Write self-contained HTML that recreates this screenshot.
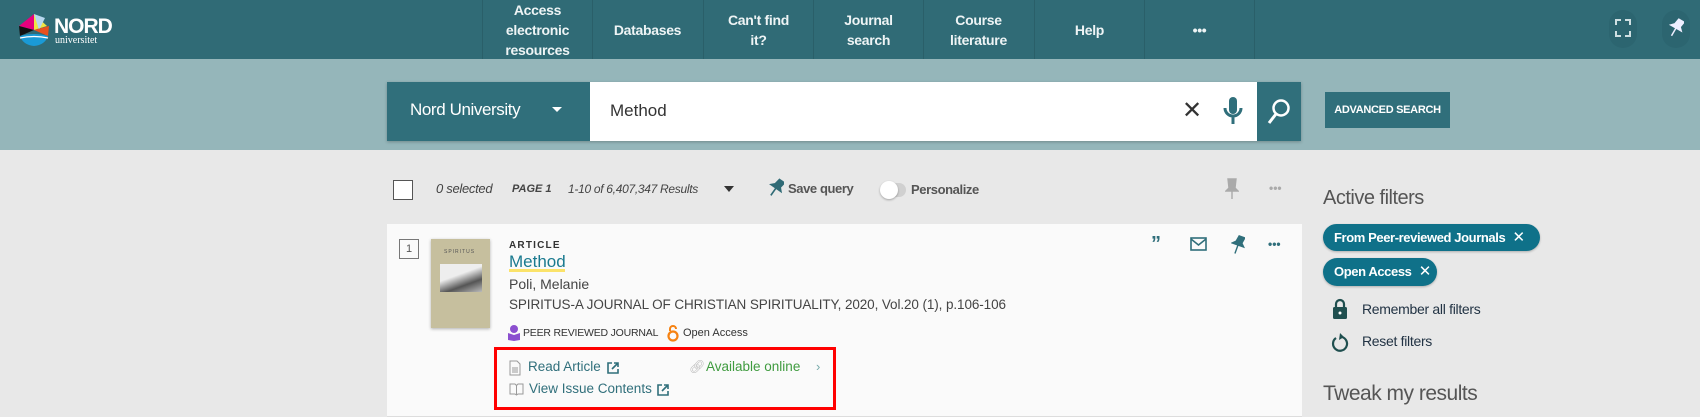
<!DOCTYPE html>
<html><head><meta charset="utf-8"><style>
*{box-sizing:border-box;margin:0;padding:0}
body{width:1700px;height:417px;overflow:hidden;background:#e8e8e8;font-family:"Liberation Sans",sans-serif;position:relative}
.a{position:absolute}
#hdr{left:0;top:0;width:1700px;height:59px;background:#306b76}
.nav{top:0;height:59px;width:110px;border-left:1px solid #2a5f69;color:#eef4f5;font-weight:bold;font-size:14px;line-height:20px;display:flex;align-items:center;justify-content:center;text-align:center;letter-spacing:-0.3px}
#band{left:0;top:59px;width:1700px;height:91px;background:#95b6ba}
.t{white-space:nowrap}
</style></head><body>
<div id="hdr" class="a"></div>
<svg class="a" style="left:17px;top:12px" width="34" height="36" viewBox="0 0 34 36">
<path d="M17 2 L2 14 L17 18Z" fill="#e5007d"/><path d="M17 2 L30 14 L17 18Z" fill="#f0e442"/><path d="M17 2 L22 18 L28 6Z" fill="#b7d7ef"/>
<path d="M2 14 L17 18 L3 24Z" fill="#111"/><path d="M17 18 L32 14 L31 24Z" fill="#e8501e"/>
<path d="M3 24 Q17 20 31 24 Q28 33 17 34 Q6 33 3 24Z" fill="#1a9ad6"/><path d="M3 26 Q17 23 31 26" stroke="#fff" stroke-width="1.2" fill="none"/></svg>
<div class="a t" style="left:54px;top:15px;color:#fff;font-weight:bold;font-size:21px;letter-spacing:-1px">NORD</div>
<div class="a t" style="left:55px;top:35px;color:#fff;font-size:10px;font-family:'Liberation Serif',serif">universitet</div>
<div class="a nav" style="left:482px">Access<br>electronic<br>resources</div>
<div class="a nav" style="left:592px">Databases</div>
<div class="a nav" style="left:703px">Can't find<br>it?</div>
<div class="a nav" style="left:813px">Journal<br>search</div>
<div class="a nav" style="left:923px">Course<br>literature</div>
<div class="a nav" style="left:1034px">Help</div>
<div class="a nav" style="left:1144px;border-right:1px solid #2a5f69;width:111px">•••</div>
<div class="a" style="left:1609px;top:10px;width:28px;height:38px;border-radius:14px;background:#2c6570"></div>
<div class="a" style="left:1662px;top:10px;width:28px;height:38px;border-radius:14px;background:#2c6570"></div>
<div class="a" style="left:1615px;top:19px;width:16px;height:18px;border:2px dashed #cfdfe2"></div>
<svg class="a" style="left:1668px;top:18px" width="16" height="20" viewBox="0 0 16 20"><path d="M6 1h6l-1 6 3 3H2l3-3z M8 10v9" fill="#eef" stroke="#eef" stroke-width="1.5" transform="rotate(30 8 10)"/></svg>
<div id="band" class="a"></div>
<div class="a" style="left:387px;top:82px;width:914px;height:59px;background:#fff;box-shadow:0 1px 3px rgba(0,0,0,.25)"></div>
<div class="a" style="left:387px;top:82px;width:203px;height:59px;background:#306f7b"></div>
<div class="a t" style="left:410px;top:100px;color:#fff;font-size:17px;letter-spacing:-0.4px">Nord University</div>
<div class="a" style="left:552px;top:107px;border-left:5px solid transparent;border-right:5px solid transparent;border-top:5px solid #fff"></div>
<div class="a t" style="left:610px;top:101px;color:#333;font-size:17px">Method</div>
<div class="a t" style="left:1182px;top:96px;color:#333;font-size:24px">✕</div>
<svg class="a" style="left:1222px;top:96px" width="22" height="32" viewBox="0 0 22 32"><rect x="7" y="1" width="8" height="17" rx="4" fill="#306f7b"/><path d="M3 12a8 8 0 0 0 16 0M11 20v8" stroke="#306f7b" stroke-width="3" fill="none"/></svg>
<div class="a" style="left:1257px;top:82px;width:44px;height:59px;background:#306f7b"></div>
<svg class="a" style="left:1266px;top:98px" width="26" height="28" viewBox="0 0 26 28"><circle cx="15" cy="10" r="7.5" stroke="#fff" stroke-width="2.5" fill="none"/><path d="M10 16 L3 25" stroke="#fff" stroke-width="3"/></svg>
<div class="a" style="left:1325px;top:92px;width:125px;height:36px;background:#306f7b;color:#fff;font-size:11px;font-weight:bold;display:flex;align-items:center;justify-content:center;letter-spacing:-0.3px">ADVANCED SEARCH</div>
<!-- toolbar -->
<div class="a" style="left:393px;top:180px;width:20px;height:20px;border:1.5px solid #555;background:#fff"></div>
<div class="a t" style="left:436px;top:181px;font-size:13px;font-style:italic;color:#444;letter-spacing:-0.3px">0 selected</div>
<div class="a t" style="left:512px;top:183px;font-size:11px;font-style:italic;font-weight:bold;color:#444">PAGE 1</div>
<div class="a t" style="left:568px;top:182px;font-size:12px;font-style:italic;color:#444;letter-spacing:-0.3px">1-10 of 6,407,347 Results</div>
<div class="a" style="left:724px;top:186px;border-left:5px solid transparent;border-right:5px solid transparent;border-top:6px solid #333"></div>
<svg class="a" style="left:768px;top:178px" width="16" height="20" viewBox="0 0 16 20"><path d="M6 1h6l-1 6 3 3H2l3-3z M8 10v9" fill="#306b76" stroke="#306b76" stroke-width="1.6" transform="rotate(35 8 10)"/></svg>
<div class="a t" style="left:788px;top:181px;font-size:13px;font-weight:bold;color:#555;letter-spacing:-0.4px">Save query</div>
<div class="a" style="left:882px;top:183px;width:24px;height:14px;border-radius:7px;background:#d0d0d0"></div>
<div class="a" style="left:880px;top:181px;width:18px;height:18px;border-radius:9px;background:#fff;box-shadow:0 1px 2px rgba(0,0,0,.3)"></div>
<div class="a t" style="left:911px;top:182px;font-size:13px;font-weight:bold;color:#555;letter-spacing:-0.4px">Personalize</div>
<svg class="a" style="left:1225px;top:178px" width="14" height="22" viewBox="0 0 14 22"><path d="M3 1h8l-1 9 3 3H1l3-3z M7 13v8" fill="#aaa" stroke="#aaa" stroke-width="1.4"/></svg>
<div class="a t" style="left:1269px;top:181px;font-size:12px;color:#aaa;font-weight:bold">•••</div>
<!-- card -->
<div class="a" style="left:387px;top:224px;width:915px;height:193px;background:#fafafa;border-bottom:1px solid #ddd"></div>
<div class="a" style="left:399px;top:239px;width:20px;height:20px;border:1px solid #777;font-size:11px;color:#555;text-align:center;line-height:18px">1</div>
<div class="a" style="left:431px;top:239px;width:59px;height:89px;background:#c6bf9e;box-shadow:0 1px 3px rgba(0,0,0,.3)"></div>
<div class="a t" style="left:444px;top:249px;font-size:5px;color:#555;letter-spacing:1px">SPIRITUS</div>
<div class="a" style="left:440px;top:264px;width:42px;height:28px;background:linear-gradient(160deg,#eee 40%,#555 70%,#bbb)"></div>
<div class="a t" style="left:509px;top:240px;font-size:10px;font-weight:bold;color:#333;letter-spacing:1.2px">ARTICLE</div>
<div class="a" style="left:509px;top:269px;width:56px;height:3px;background:#fbe36a"></div>
<div class="a t" style="left:509px;top:252px;font-size:17px;color:#1a7a8f">Method</div>
<div class="a t" style="left:509px;top:276px;font-size:14px;color:#444">Poli, Melanie</div>
<div class="a t" style="left:509px;top:297px;font-size:13.5px;color:#444;letter-spacing:-0.1px">SPIRITUS-A JOURNAL OF CHRISTIAN SPIRITUALITY, 2020, Vol.20 (1), p.106-106</div>
<svg class="a" style="left:507px;top:325px" width="14" height="16" viewBox="0 0 14 16"><circle cx="7" cy="4" r="4" fill="#8b4fcf"/><path d="M1 8 L7 10 L13 8 L13 15 L7 16 L1 15Z" fill="#8b4fcf"/></svg>
<div class="a t" style="left:523px;top:327px;font-size:10.5px;color:#333;letter-spacing:-0.2px">PEER REVIEWED JOURNAL</div>
<svg class="a" style="left:667px;top:324px" width="12" height="18" viewBox="0 0 12 18"><path d="M3 7V5a3 3 0 0 1 6 0" stroke="#f68212" stroke-width="2" fill="none"/><circle cx="6" cy="12" r="4.5" stroke="#f68212" stroke-width="2.2" fill="none"/></svg>
<div class="a t" style="left:683px;top:327px;font-size:11px;color:#333">Open Access</div>
<div class="a" style="left:494px;top:347px;width:342px;height:63px;border:3px solid #f00"></div>
<svg class="a" style="left:509px;top:360px" width="12" height="16" viewBox="0 0 12 16"><path d="M1 1h7l3 3v11H1z M3 8h6M3 10h6M3 12h6" stroke="#999" fill="none"/></svg>
<div class="a t" style="left:528px;top:359px;font-size:13.5px;color:#306f7b">Read Article</div>
<svg class="a" style="left:607px;top:362px" width="12" height="12" viewBox="0 0 12 12"><path d="M5 1H1v10h10V7M7 1h4v4M11 1L5 7" stroke="#306f7b" stroke-width="1.6" fill="none"/></svg>
<svg class="a" style="left:509px;top:383px" width="15" height="13" viewBox="0 0 15 13"><path d="M1 1h5l1.5 1.5L9 1h5v10H9l-1.5 1L6 11H1z M7.5 2.5V12" stroke="#999" fill="none"/></svg>
<div class="a t" style="left:529px;top:381px;font-size:13.5px;color:#306f7b">View Issue Contents</div>
<svg class="a" style="left:657px;top:384px" width="12" height="12" viewBox="0 0 12 12"><path d="M5 1H1v10h10V7M7 1h4v4M11 1L5 7" stroke="#306f7b" stroke-width="1.6" fill="none"/></svg>
<div class="a t" style="left:689px;top:359px;font-size:13px;color:#bbb">🔗︎</div>
<div class="a t" style="left:706px;top:359px;font-size:13.5px;color:#3f9b3f">Available online</div>
<div class="a t" style="left:816px;top:359px;font-size:13px;color:#7aa">›</div>
<div class="a t" style="left:1151px;top:233px;font-size:20px;font-weight:bold;color:#306f7b">”</div>
<svg class="a" style="left:1190px;top:237px" width="17" height="14" viewBox="0 0 17 14"><rect x="1" y="1" width="15" height="12" stroke="#306f7b" stroke-width="1.6" fill="none"/><path d="M1 2l7.5 6L16 2" stroke="#306f7b" stroke-width="1.6" fill="none"/></svg>
<svg class="a" style="left:1231px;top:235px" width="14" height="20" viewBox="0 0 14 20"><path d="M5 1h6l-1 6 3 3H1l3-3z M7 10v9" fill="#306f7b" stroke="#306f7b" stroke-width="1.4" transform="rotate(20 7 10)"/></svg>
<div class="a t" style="left:1268px;top:237px;font-size:12px;color:#306f7b;font-weight:bold">•••</div>
<!-- right -->
<div class="a t" style="left:1323px;top:187px;font-size:20px;color:#555;letter-spacing:-0.5px">Active filters</div>
<div class="a t" style="left:1323px;top:224px;height:27px;width:217px;border-radius:14px;background:#0f7189;color:#fff;font-size:13px;font-weight:bold;line-height:27px;padding-left:11px;letter-spacing:-0.4px;box-shadow:0 1px 2px rgba(0,0,0,.25)">From Peer-reviewed Journals <span style="font-weight:normal;font-size:15px;margin-left:4px">✕</span></div>
<div class="a t" style="left:1323px;top:258px;height:28px;width:114px;border-radius:14px;background:#0f7189;color:#fff;font-size:13px;font-weight:bold;line-height:28px;padding-left:11px;letter-spacing:-0.4px;box-shadow:0 1px 2px rgba(0,0,0,.25)">Open Access <span style="font-weight:normal;font-size:15px;margin-left:4px">✕</span></div>
<svg class="a" style="left:1332px;top:298px" width="16" height="22" viewBox="0 0 16 22"><path d="M4 9V6a4 4 0 0 1 8 0v3" stroke="#1f4f4f" stroke-width="2.2" fill="none"/><rect x="1" y="9" width="14" height="12" rx="1.5" fill="#1f4f4f"/><circle cx="8" cy="15" r="1.5" fill="#fff"/></svg>
<div class="a t" style="left:1362px;top:301px;font-size:14px;color:#234;letter-spacing:-0.3px">Remember all filters</div>
<svg class="a" style="left:1331px;top:332px" width="18" height="20" viewBox="0 0 18 20"><path d="M5 6a7 7 0 1 0 6-1" stroke="#1f4f4f" stroke-width="2.2" fill="none"/><path d="M9 1L13 5L8 8Z" fill="#1f4f4f"/></svg>
<div class="a t" style="left:1362px;top:333px;font-size:14px;color:#234;letter-spacing:-0.3px">Reset filters</div>
<div class="a t" style="left:1323px;top:382px;font-size:21px;color:#555;letter-spacing:-0.5px">Tweak my results</div>
</body></html>
